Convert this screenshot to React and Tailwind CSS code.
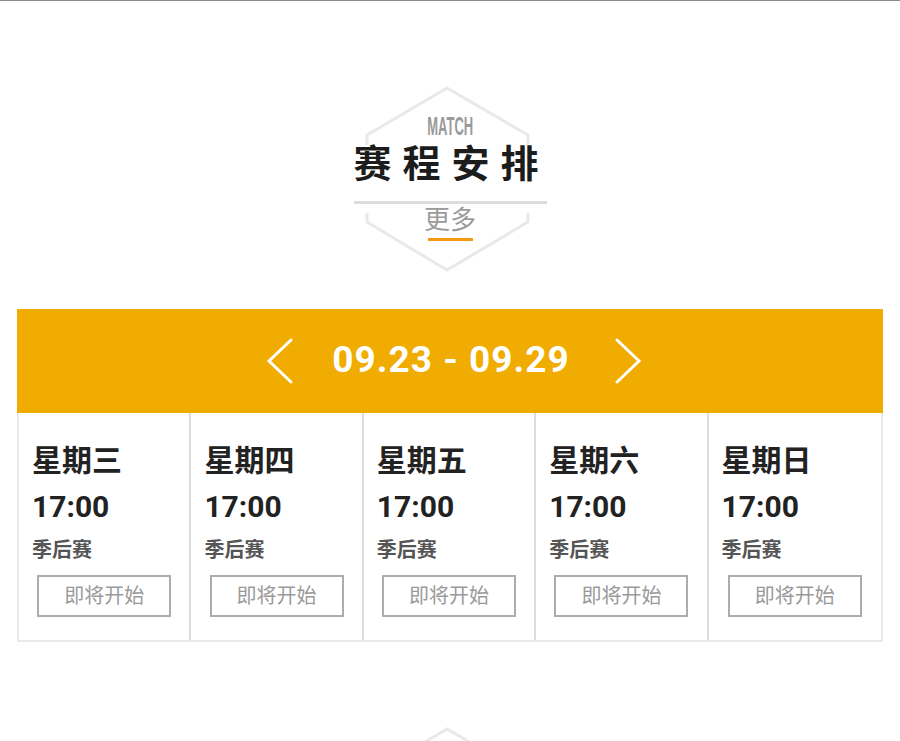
import React from 'react';

const days = ['星期三', '星期四', '星期五', '星期六', '星期日'];

function Hexagon() {
  // decorative outline behind the section title, split around the text
  return (
    <svg
      className="absolute left-1/2 top-[85px] -ml-[86px] pointer-events-none"
      width="167"
      height="187"
      viewBox="0 0 167 187"
      fill="none"
      stroke="#e9e9e9"
      strokeWidth="3"
    >
      <path d="M3 59 L3 49 L83 2 L164 49 L164 59" />
      <path d="M3 127 L3 136 L83 184 L164 136 L164 127" />
    </svg>
  );
}

function SectionHeader({ en, title }) {
  return (
    <div className="relative h-[308px] flex flex-col items-center">
      <Hexagon />
      <div
        className="relative mt-[113px] h-[25px] text-[25px] leading-[25px] font-bold text-[#9a9a9a] scale-x-[0.52]"
        style={{ fontFamily: '"Liberation Sans Narrow", "Liberation Sans", sans-serif' }}
      >
        {en}
      </div>
      <h2 className="relative mt-[6px] pl-[3px] text-[38px] leading-[38px] font-bold tracking-[11px] text-[#1c1c1c]">
        {title}
      </h2>
      <div className="relative mt-[18px] w-[193px] h-[3px] bg-[#dddddd]" />
      <a className="relative mt-[3px] text-[26px] leading-[26px] text-[#9b9b9b] cursor-pointer">更多</a>
      <div className="relative mt-[5px] w-[45px] h-[3px] bg-[#f39a12]" />
    </div>
  );
}

function Chevron({ dir }) {
  return (
    <svg width="28" height="48" viewBox="0 0 28 48" fill="none" stroke="#ffffff" strokeWidth="3" strokeLinecap="round">
      {dir === 'left' ? <path d="M25 3 L3 24 L25 45" /> : <path d="M3 3 L25 24 L3 45" />}
    </svg>
  );
}

function DayCard({ day, last }) {
  return (
    <div className={'flex flex-col pt-[33px] pb-[23px] ' + (last ? '' : 'border-r-2 border-[#dcdcdc]')}>
      <div className="pl-[13px] text-[30px] leading-[30px] font-bold text-[#222222]">{day}</div>
      <div className="pl-[13px] mt-[16px] text-[30px] leading-[30px] font-bold text-[#222222]">17:00</div>
      <div className="pl-[13px] mt-[18px] text-[20px] leading-[20px] font-bold text-[#555555]">季后赛</div>
      <button className="self-center mt-[15px] w-[134px] h-[42px] border-2 border-[#acacac] text-[20px] text-[#9a9a9a] bg-white">
        即将开始
      </button>
    </div>
  );
}

export default function App() {
  return (
    <div
      className="bg-white min-h-screen"
      style={{ fontFamily: 'Roboto, "Noto Sans CJK SC", sans-serif' }}
    >
      <div className="h-px bg-[#8c8c8c]" />
      <SectionHeader en="MATCH" title="赛程安排" />

      <div className="mx-[17px]">
        <div className="h-[104px] pl-[8px] bg-[#f0ac00] flex items-center justify-center">
          <Chevron dir="left" />
          <div className="ml-[38px] mr-[44px] -mt-[3px] text-[37px] leading-[37px] font-bold tracking-[1px] text-white">
            09.23 - 09.29
          </div>
          <Chevron dir="right" />
        </div>
        <div className="grid grid-cols-5 border-2 border-t-0 border-[#e9e9e9]">
          {days.map((d, i) => (
            <DayCard key={d} day={d} last={i === days.length - 1} />
          ))}
        </div>
      </div>

      {/* next section, only the top of its hexagon is in view */}
      <div className="relative h-[120px]">
        <Hexagon />
      </div>
    </div>
  );
}
